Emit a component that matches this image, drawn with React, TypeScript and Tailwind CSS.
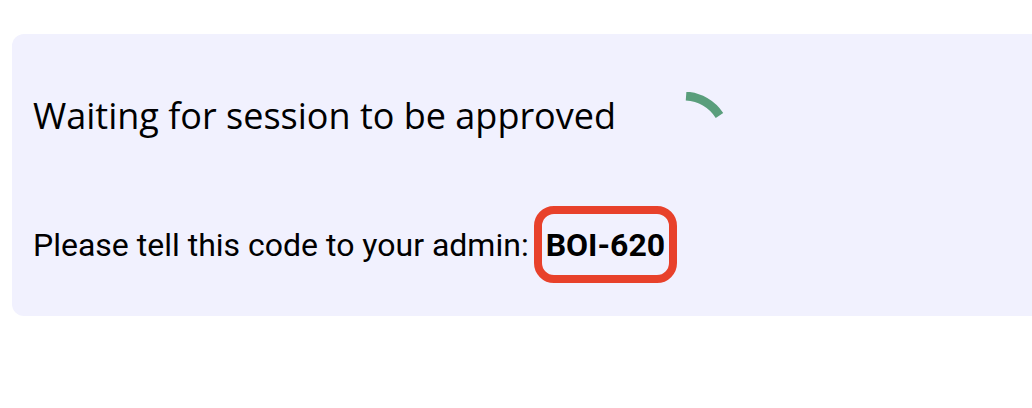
import React from "react";

const Spinner: React.FC = () => (
  <svg width="96" height="96" viewBox="0 0 96 96" className="shrink-0">
    <path d="M51.07 4.11 A44 44 0 0 1 84.48 23.4" fill="none" stroke="#5a9e7c" strokeWidth="9" />
  </svg>
);

export default function App() {
  return (
    <div className="w-[1032px] h-[408px] bg-white overflow-hidden pt-[34px] pl-3">
      <div className="h-[282px] w-[1040px] rounded-l-[12px] bg-[#f1f1fe] pl-[21px] pt-[58px] text-black">
        <div className="flex items-start">
          <h1 className="w-[602px] mt-[2px] text-[36px] leading-[44px] font-normal font-['Open_Sans',sans-serif]">
            Waiting for session to be approved
          </h1>
          <Spinner />
        </div>
        <div className="mt-[18px] flex items-center font-['Roboto',sans-serif]">
          <span className="text-[32px] leading-[38px]">Please tell this code to your admin:</span>
          <span className="ml-[5px] inline-flex items-center h-[77px] border-[8px] border-[#e8412b] rounded-[20px] px-[4px]">
            <span className="text-[32px] leading-[38px] font-bold">BOI-620</span>
          </span>
        </div>
      </div>
    </div>
  );
}
